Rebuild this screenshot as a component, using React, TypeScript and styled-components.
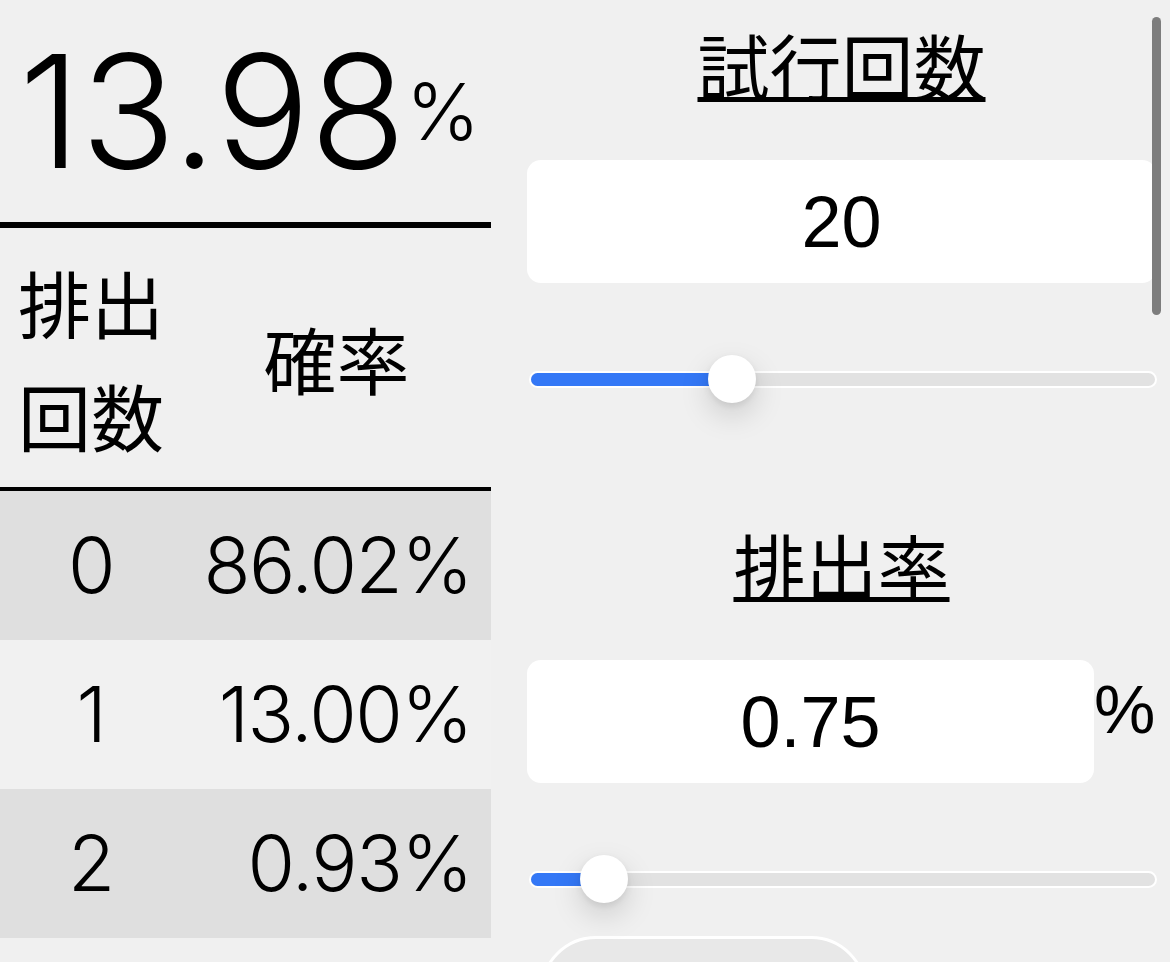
import React from "react";
import styled, { createGlobalStyle } from "styled-components";

const Global = createGlobalStyle`
  html, body {
    margin: 0;
    padding: 0;
    background: #f0f0f0;
  }
  body {
    font-family: "Noto Sans CJK JP", "Noto Sans", sans-serif;
    color: #000;
    overflow: hidden;
  }
`;

const Page = styled.div`
  position: relative;
  display: flex;
  gap: 36px;
  width: 1170px;
  height: 962px;
  overflow: hidden;
  background: #f0f0f0;
`;

const Left = styled.div`
  flex: none;
  width: 491px;
`;

const Total = styled.div`
  height: 222px;
  border-bottom: 6px solid #000;
  display: flex;
  align-items: center;
  justify-content: center;
  padding-left: 8px;
  font-family: Inter, "Noto Sans", sans-serif;
  font-weight: 300;
  font-size: 157px;
  line-height: 1;
`;

const TotalUnit = styled.span`
  font-size: 79px;
`;

const HeadRow = styled.div`
  display: grid;
  grid-template-columns: 182px 1fr;
  height: 259px;
  border-bottom: 4px solid #000;
`;

const HeadCell = styled.div`
  display: flex;
  align-items: center;
  justify-content: center;
  padding: 0 12px;
  font-size: 73px;
  line-height: 113px;
  text-align: center;
`;

const Row = styled.div<{ $shade: boolean }>`
  display: grid;
  grid-template-columns: 182px 1fr;
  align-items: center;
  height: 149px;
  background: ${(p) => (p.$shade ? "#dfdfdf" : "#f1f1f1")};
  font-family: Inter, "Noto Sans", sans-serif;
  font-weight: 300;
  font-size: 77px;
  letter-spacing: -1.5px;
  line-height: 1;
`;

const CountCell = styled.div`
  text-align: center;
`;

const ProbCell = styled.div`
  text-align: right;
  padding-right: 19px;
`;

const Right = styled.div`
  flex: none;
  width: 629px;
  display: flex;
  flex-direction: column;
`;

const Section = styled.section`
  display: flex;
  flex-direction: column;
  & + & {
    margin-top: 64px;
  }
`;

const Title = styled.h2`
  box-sizing: border-box;
  margin: 0;
  height: 160px;
  padding-top: 28px;
  text-align: center;
  font-size: 72px;
  font-weight: 400;
  line-height: 72px;
`;

const TitleText = styled.span`
  text-decoration: underline;
  text-decoration-thickness: 5px;
  text-underline-offset: 2px;
`;

const FieldRow = styled.div`
  display: flex;
  align-items: flex-start;
`;

const Field = styled.input<{ $width?: number }>`
  box-sizing: border-box;
  flex: none;
  width: ${(p) => (p.$width ? `${p.$width}px` : "100%")};
  height: 123px;
  padding: 0;
  border: none;
  border-radius: 14px;
  outline: none;
  background: #fff;
  color: #000;
  font-family: "Liberation Sans", Arial, sans-serif;
  font-size: 72px;
  text-align: center;
`;

const FieldUnit = styled.span`
  margin-top: 15px;
  margin-left: 0;
  font-family: "Liberation Sans", Arial, sans-serif;
  font-size: 69px;
  line-height: 70px;
`;

const SliderWrap = styled.div`
  position: relative;
  display: flex;
  align-items: center;
  height: 48px;
  margin: 72px -1px 33px 2px;
`;

const Track = styled.div`
  box-sizing: border-box;
  width: 100%;
  height: 17px;
  border: 2px solid #fff;
  border-radius: 9px;
  background: #e2e2e2;
  overflow: hidden;
`;

const Fill = styled.div`
  height: 100%;
  background: #3478f6;
`;

const Thumb = styled.div`
  position: absolute;
  top: 0;
  width: 48px;
  height: 48px;
  border-radius: 50%;
  background: #fff;
  box-shadow: 0 12px 30px rgba(0, 0, 0, 0.15), 0 3px 7px rgba(0, 0, 0, 0.08);
`;

const PillButton = styled.button`
  box-sizing: border-box;
  flex: none;
  margin-left: 13px;
  width: 327px;
  height: 112px;
  border: 3px solid #fff;
  border-radius: 56px;
  background: #e8e8e8;
`;

const ScrollIndicator = styled.div`
  position: absolute;
  left: 1152px;
  top: 17px;
  width: 9px;
  height: 298px;
  border-radius: 5px;
  background: #7d7d7d;
`;

const Slider = ({ fraction }: { fraction: number }) => {
  const travel = 580;
  const left = fraction * travel;
  return (
    <SliderWrap>
      <Track>
        <Fill style={{ width: `${left + 22}px` }} />
      </Track>
      <Thumb style={{ left: `${left}px` }} />
    </SliderWrap>
  );
};

const rows = [
  { n: 0, p: "86.02%" },
  { n: 1, p: "13.00%" },
  { n: 2, p: "0.93%" },
];

export default function App() {
  return (
    <>
      <Global />
      <Page>
        <Left>
          <Total>
            13.98<TotalUnit>%</TotalUnit>
          </Total>
          <HeadRow>
            <HeadCell>排出回数</HeadCell>
            <HeadCell>確率</HeadCell>
          </HeadRow>
          {rows.map((r, i) => (
            <Row key={r.n} $shade={i % 2 === 0}>
              <CountCell>{r.n}</CountCell>
              <ProbCell>{r.p}</ProbCell>
            </Row>
          ))}
        </Left>
        <Right>
          <Section>
            <Title>
              <TitleText>試行回数</TitleText>
            </Title>
            <Field value="20" readOnly />
            <Slider fraction={0.3086} />
          </Section>
          <Section>
            <Title>
              <TitleText>排出率</TitleText>
            </Title>
            <FieldRow>
              <Field $width={567} value="0.75" readOnly />
              <FieldUnit>%</FieldUnit>
            </FieldRow>
            <Slider fraction={0.088} />
          </Section>
          <PillButton aria-label="計算" />
        </Right>
        <ScrollIndicator />
      </Page>
    </>
  );
}
